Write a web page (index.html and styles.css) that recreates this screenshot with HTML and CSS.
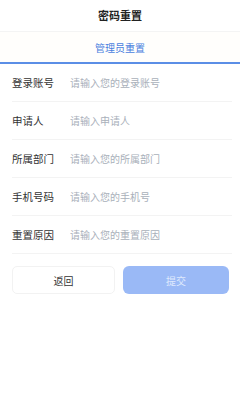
FILE: index.html
```html
<!DOCTYPE html>
<html>
    <head>
        <meta charset="utf-8">
        <link rel="stylesheet" href="styles.css">
    </head>
<body>
    <div class="header">密码重置</div>
    <div class="tabs">
        <span class="tab active">管理员重置</span>
    </div>
    <div class="form">
        <div class="row">
            <span class="label">登录账号</span>
            <input class="field" placeholder="请输入您的登录账号">
        </div>
        <div class="row">
            <span class="label">申请人</span>
            <input class="field" placeholder="请输入申请人">
        </div>
        <div class="row">
            <span class="label">所属部门</span>
            <input class="field" placeholder="请输入您的所属部门">
        </div>
        <div class="row">
            <span class="label">手机号码</span>
            <input class="field" placeholder="请输入您的手机号">
        </div>
        <div class="row">
            <span class="label">重置原因</span>
            <input class="field" placeholder="请输入您的重置原因">
        </div>
    </div>
    <div class="buttons">
        <button class="btn back">返回</button>
        <button class="btn submit">提交</button>
    </div>
</body>
</html>
```

FILE: styles.css
```css
body {
    margin: 0;
    background: #fff;
    font-family: "Noto Sans CJK SC", "Noto Sans", sans-serif;
    color: #333;
}

.header {
    height: 31px;
    line-height: 31px;
    text-align: center;
    font-size: 11px;
    font-weight: bold;
    color: #222;
    border-bottom: 1px solid #f4f4f4;
}

.tabs {
    height: 30px;
    display: flex;
    justify-content: center;
    align-items: center;
    border-bottom: 2px solid #5b8ee6;
    background: #fffefc;
}

.tab {
    font-size: 10px;
    color: #4a7fdf;
}

.form {
    padding: 0 8px 0 12px;
}

.row {
    height: 37px;
    display: flex;
    align-items: center;
    border-bottom: 1px solid #f3f3f3;
}

.label {
    width: 58px;
    font-size: 10.5px;
    color: #333;
}

.field {
    flex: 1;
    border: none;
    outline: none;
    padding: 0;
    font-family: inherit;
    font-size: 10px;
    color: #333;
    background: transparent;
}

.field::placeholder {
    color: #a9b0ba;
}

.buttons {
    display: flex;
    gap: 8px;
    padding: 12px 11px 0 12px;
}

.btn {
    height: 28px;
    border-radius: 5px;
    font-family: inherit;
    font-size: 10px;
}

.back {
    width: 103px;
    background: #fff;
    border: 1px solid #f2f2f2;
    color: #333;
}

.submit {
    flex: 1;
    background: #9ab9f6;
    border: none;
    border-radius: 6px;
    color: #dfe9fd;
}
```
